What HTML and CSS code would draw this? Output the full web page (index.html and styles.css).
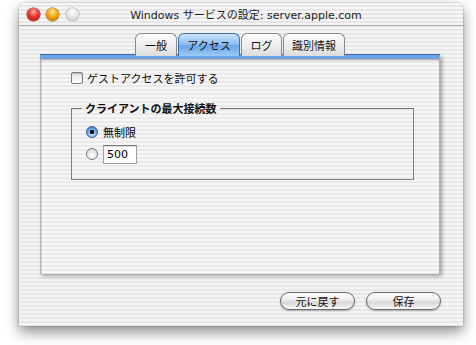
FILE: index.html
```html
<!DOCTYPE html>
<html lang="ja">
<head>
<meta charset="utf-8">
<link rel="stylesheet" href="styles.css">
</head>
<body>
<div class="window">
  <div class="titlebar">
    <div class="lights">
      <span class="light red"></span>
      <span class="light yellow"></span>
      <span class="light gray"></span>
    </div>
    <div class="title">Windows サービスの設定: server.apple.com</div>
  </div>
  <div class="content">
    <div class="tabs">
      <div class="tab">一般</div>
      <div class="tab active">アクセス</div>
      <div class="tab">ログ</div>
      <div class="tab">識別情報</div>
    </div>
    <div class="panel">
      <label class="check"><span class="box"></span>ゲストアクセスを許可する</label>
      <fieldset class="group">
        <legend>クライアントの最大接続数</legend>
        <div class="radio-row"><span class="radio on"></span><span>無制限</span></div>
        <div class="radio-row"><span class="radio"></span><span class="field">500</span></div>
      </fieldset>
    </div>
    <div class="buttons">
      <div class="btn">元に戻す</div>
      <div class="btn">保存</div>
    </div>
  </div>
</div>
</body>
</html>
```
FILE: styles.css
```css
* { box-sizing: border-box; }
html, body { margin: 0; padding: 0; background: #fff; }
body {
  width: 476px; height: 345px; overflow: hidden;
  font-family: "DejaVu Sans", "Noto Sans CJK JP", sans-serif;
  font-size: 11px; color: #000;
}
.window {
  margin: 3px 0 0 19px;
  width: 444px; height: 323px;
  border-radius: 6px 6px 0 0;
  background: repeating-linear-gradient(to bottom, #f4f4f4 0, #f4f4f4 2px, #e8e8e8 2px, #e8e8e8 4px);
  box-shadow: 0 6px 14px rgba(0,0,0,0.45), 0 0 2px rgba(0,0,0,0.35);
  display: flex; flex-direction: column;
}
.titlebar {
  height: 23px; position: relative;
  display: flex; align-items: center; justify-content: center;
  border-bottom: 1px solid #a8a8a8;
  border-radius: 6px 6px 0 0;
  background: repeating-linear-gradient(to bottom, #f6f6f6 0, #f6f6f6 2px, #e6e6e6 2px, #e6e6e6 4px);
}
.lights { position: absolute; left: 8px; top: 5px; display: flex; gap: 6px; }
.light { width: 13px; height: 13px; border-radius: 50%; display: block; }
.light.red { background: radial-gradient(circle at 50% 30%, #ffb0a8 0, #e8352a 45%, #a80e08 100%); box-shadow: 0 0 0 0.5px #7a1010; }
.light.yellow { background: radial-gradient(circle at 50% 30%, #ffe9a0 0, #f5a50c 45%, #b36a00 100%); box-shadow: 0 0 0 0.5px #8a5a00; }
.light.gray { background: radial-gradient(circle at 50% 30%, #ffffff 0, #e2e2e2 50%, #c4c4c4 100%); box-shadow: 0 0 0 0.5px #9a9a9a; margin-left: 1px; }
.title {
  font-family: "DejaVu Sans", "Noto Sans CJK JP", sans-serif;
  font-size: 11px; color: #222; padding-left: 10px;
}
.content { flex: 1; display: flex; flex-direction: column; padding: 6px 0 0 21px; }
.tabs { display: flex; margin-left: 95px; height: 24px; align-items: flex-end; position: relative; z-index: 2; margin-bottom: -1px; }
.tab {
  height: 23px; padding: 0; margin-right: 1px; white-space: nowrap;
  display: flex; align-items: center; justify-content: center;
  font-family: "Noto Sans CJK JP", sans-serif; font-size: 11px; color: #111;
  border: 1px solid #8a8a8a; border-bottom: none;
  border-radius: 6px 6px 0 0;
  background: linear-gradient(to bottom, #fdfdfd 0, #eeeeee 50%, #dcdcdc 100%);
}
.tab:nth-child(1) { width: 42px; }
.tab:nth-child(2) { width: 62px; }
.tab:nth-child(3) { width: 41px; }
.tab:nth-child(4) { width: 62px; }
.tab.active {
  border-color: #3b6fb8;
  background: linear-gradient(to bottom, #cfe4fb 0, #8ebff0 45%, #6aa6e6 55%, #9ccaf6 100%);
}
.panel {
  width: 400px; height: 219px;
  border-top: 4px solid #6ba3e4;
  border-right: 1px solid #b0b0b0;
  box-shadow: inset 1px 1px 2px rgba(0,0,0,0.35), 2px 2px 4px rgba(0,0,0,0.35), 0 -1px 0 #3f6fb0;
  background: repeating-linear-gradient(to bottom, #f6f6f6 0, #f6f6f6 2px, #eaeaea 2px, #eaeaea 4px);
  padding: 11px 0 0 31px;
  display: flex; flex-direction: column;
}
.check {
  display: flex; align-items: center; gap: 4px;
  font-family: "Noto Sans CJK JP", sans-serif; font-size: 11px; color: #111;
}
.box {
  width: 12px; height: 12px; border: 1px solid #7c7c7c; border-radius: 2px;
  background: linear-gradient(to bottom, #e0e0e0, #ffffff);
  box-shadow: inset 0 1px 1px rgba(0,0,0,0.2);
}
.group {
  margin: 14px 0 0 0; padding: 5px 0 0 14px;
  width: 343px; height: 80px;
  border: 1px solid #7e7e7e;
  border-top-color: #6e6e6e;
}
.group legend {
  font-family: "Noto Sans CJK JP", sans-serif; font-weight: bold; font-size: 11px;
  padding: 0 3px; margin-left: -4px; color: #111;
}
.radio-row { display: flex; align-items: center; gap: 5px; height: 22px;
  font-family: "Noto Sans CJK JP", sans-serif; font-size: 11px; }
.radio {
  width: 12px; height: 12px; border-radius: 50%;
  border: 1px solid #7a7a7a;
  background: radial-gradient(circle at 50% 65%, #ffffff 0, #e4e4e4 60%, #bdbdbd 100%);
}
.radio.on {
  border-color: #2f5e9e;
  background: radial-gradient(circle, #111 0, #111 2px, transparent 2.5px), radial-gradient(circle at 50% 70%, #cbe5ff 0, #6aa8ec 55%, #2f6cc0 100%);
}
.field {
  width: 34px; height: 19px; margin-left: 0; margin-top: 1px;
  background: #fff; border: 1px solid #a0a0a0; border-top-color: #7a7a7a;
  box-shadow: inset 0 1px 1px rgba(0,0,0,0.15);
  font-family: "DejaVu Sans", sans-serif; font-size: 11px;
  padding: 2px 0 0 3px;
}
.buttons { display: flex; justify-content: flex-end; gap: 11px; padding: 18px 22px 0 0; }
.btn {
  width: 75px; height: 18px; border-radius: 9px;
  border: 1px solid #6a6a6a;
  background: linear-gradient(to bottom, #ffffff 0, #f0f0f0 40%, #d8d8d8 60%, #fafafa 100%);
  box-shadow: 0 1px 2px rgba(0,0,0,0.3);
  display: flex; align-items: center; justify-content: center;
  font-family: "Noto Sans CJK JP", sans-serif; font-size: 11px; color: #111;
}
```
